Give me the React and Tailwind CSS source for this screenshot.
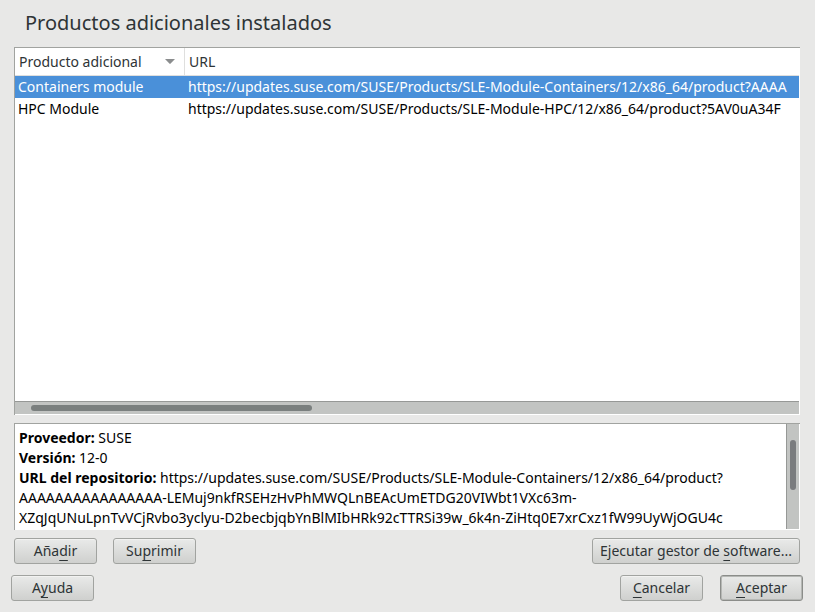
const products = [
  {
    name: 'Containers module',
    url: 'https://updates.suse.com/SUSE/Products/SLE-Module-Containers/12/x86_64/product?AAAA',
    selected: true,
  },
  {
    name: 'HPC Module',
    url: 'https://updates.suse.com/SUSE/Products/SLE-Module-HPC/12/x86_64/product?5AV0uA34F',
    selected: false,
  },
];

function Key({ children }) {
  return <span className="underline decoration-1 underline-offset-4 [text-decoration-skip-ink:none]">{children}</span>;
}

function Button({ children, primary = false, wide = false }) {
  return (
    <button
      type="button"
      className={`h-[26px] rounded-[3px] border bg-linear-to-b from-[#e9eae9] to-[#cfd0ce] leading-5 whitespace-nowrap text-[#2e3436] ${
        primary ? 'border-[#8b8d8a] shadow-[inset_0_0_0_1px_#b5b7b4]' : 'border-[#a1a3a0] shadow-[inset_0_1px_0_#f2f2f1]'
      } ${wide ? 'w-52' : 'w-[83px]'}`}
    >
      {children}
    </button>
  );
}

export default function App() {
  return (
    <main className="flex h-screen flex-col bg-[#e8e8e7] px-[11px] pb-[11px] font-['Noto_Sans',sans-serif] text-sm text-black">
      <h1 className="h-[47px] shrink-0 px-[14px] pt-[9px] text-xl leading-7 text-[#2e3436]">
        Productos adicionales instalados
      </h1>

      <section className="mr-1 ml-[3px] flex min-h-0 flex-1 flex-col border-t border-l border-[#a1a3a0] bg-white">
        <div className="mr-px min-h-0 flex-1 overflow-hidden">
          <table className="w-full table-fixed border-separate border-spacing-0 text-left whitespace-nowrap">
            <thead>
              <tr className="h-7 text-[#2e3436]">
                <th className="w-[170px] border-r border-b border-[#dfdfde] p-0 pr-[9px] pl-1 font-normal">
                  <span className="flex items-center justify-between">
                    Producto adicional
                    <svg className="h-[5px] w-[10px]" viewBox="0 0 10 5" fill="#8b8d8e" aria-hidden="true">
                      <path d="M0 0h10L5.6 4.6a.8.8 0 0 1-1.2 0z" />
                    </svg>
                  </span>
                </th>
                <th className="border-b border-[#dfdfde] p-0 pl-1 font-normal">URL</th>
              </tr>
            </thead>
            <tbody>
              {products.map((p) => (
                <tr key={p.name} className={`h-[22px] ${p.selected ? 'bg-[#4a90d9] text-white' : ''}`}>
                  <td className="overflow-hidden p-0 pl-[3px]">{p.name}</td>
                  <td className="overflow-hidden p-0 pl-[3px]">{p.url}</td>
                </tr>
              ))}
            </tbody>
          </table>
        </div>
        <div className="mr-px mb-px flex h-[13px] items-center border-t border-[#969896] bg-[#c2c4c2] pl-4">
          <div className="h-1.5 w-[36.6%] rounded-full bg-[#7a7f7e]" />
        </div>
      </section>

      <section className="mt-2 mr-1 ml-[3px] flex h-[107px] shrink-0 border-t border-l border-[#a1a3a0] bg-white">
        <div className="min-w-0 flex-1 overflow-hidden pt-1 pl-1 leading-5 whitespace-nowrap">
          <p><b>Proveedor:</b> SUSE</p>
          <p><b>Versión:</b> 12-0</p>
          <p>
            <b>URL del repositorio:</b> https://updates.suse.com/SUSE/Products/SLE-Module-Containers/12/x86_64/product?
            <br />
            AAAAAAAAAAAAAAAA-LEMuj9nkfRSEHzHvPhMWQLnBEAcUmETDG20VIWbt1VXc63m-
            <br />
            XZqJqUNuLpnTvVCjRvbo3yclyu-D2becbjqbYnBlMIbHRk92cTTRSi39w_6k4n-ZiHtq0E7xrCxz1fW99UyWjOGU4c
          </p>
        </div>
        <div className="mr-px mb-px w-[13px] border-l border-[#969896] bg-[#c2c4c2] px-[3px] pt-4">
          <div className="h-[50px] w-1.5 rounded-full bg-[#7a7c7e]" />
        </div>
      </section>

      <div className="mt-2 mr-1 ml-[3px] flex shrink-0 gap-4">
        <Button>Aña<Key>d</Key>ir</Button>
        <Button>Su<Key>p</Key>rimir</Button>
        <div className="flex-1" />
        <Button wide>Ejecutar gestor de <Key>s</Key>oftware...</Button>
      </div>

      <div className="mt-[11px] mr-px flex shrink-0 gap-[17px]">
        <Button>A<Key>y</Key>uda</Button>
        <div className="flex-1" />
        <Button><Key>C</Key>ancelar</Button>
        <Button primary><Key>A</Key>ceptar</Button>
      </div>
    </main>
  );
}
